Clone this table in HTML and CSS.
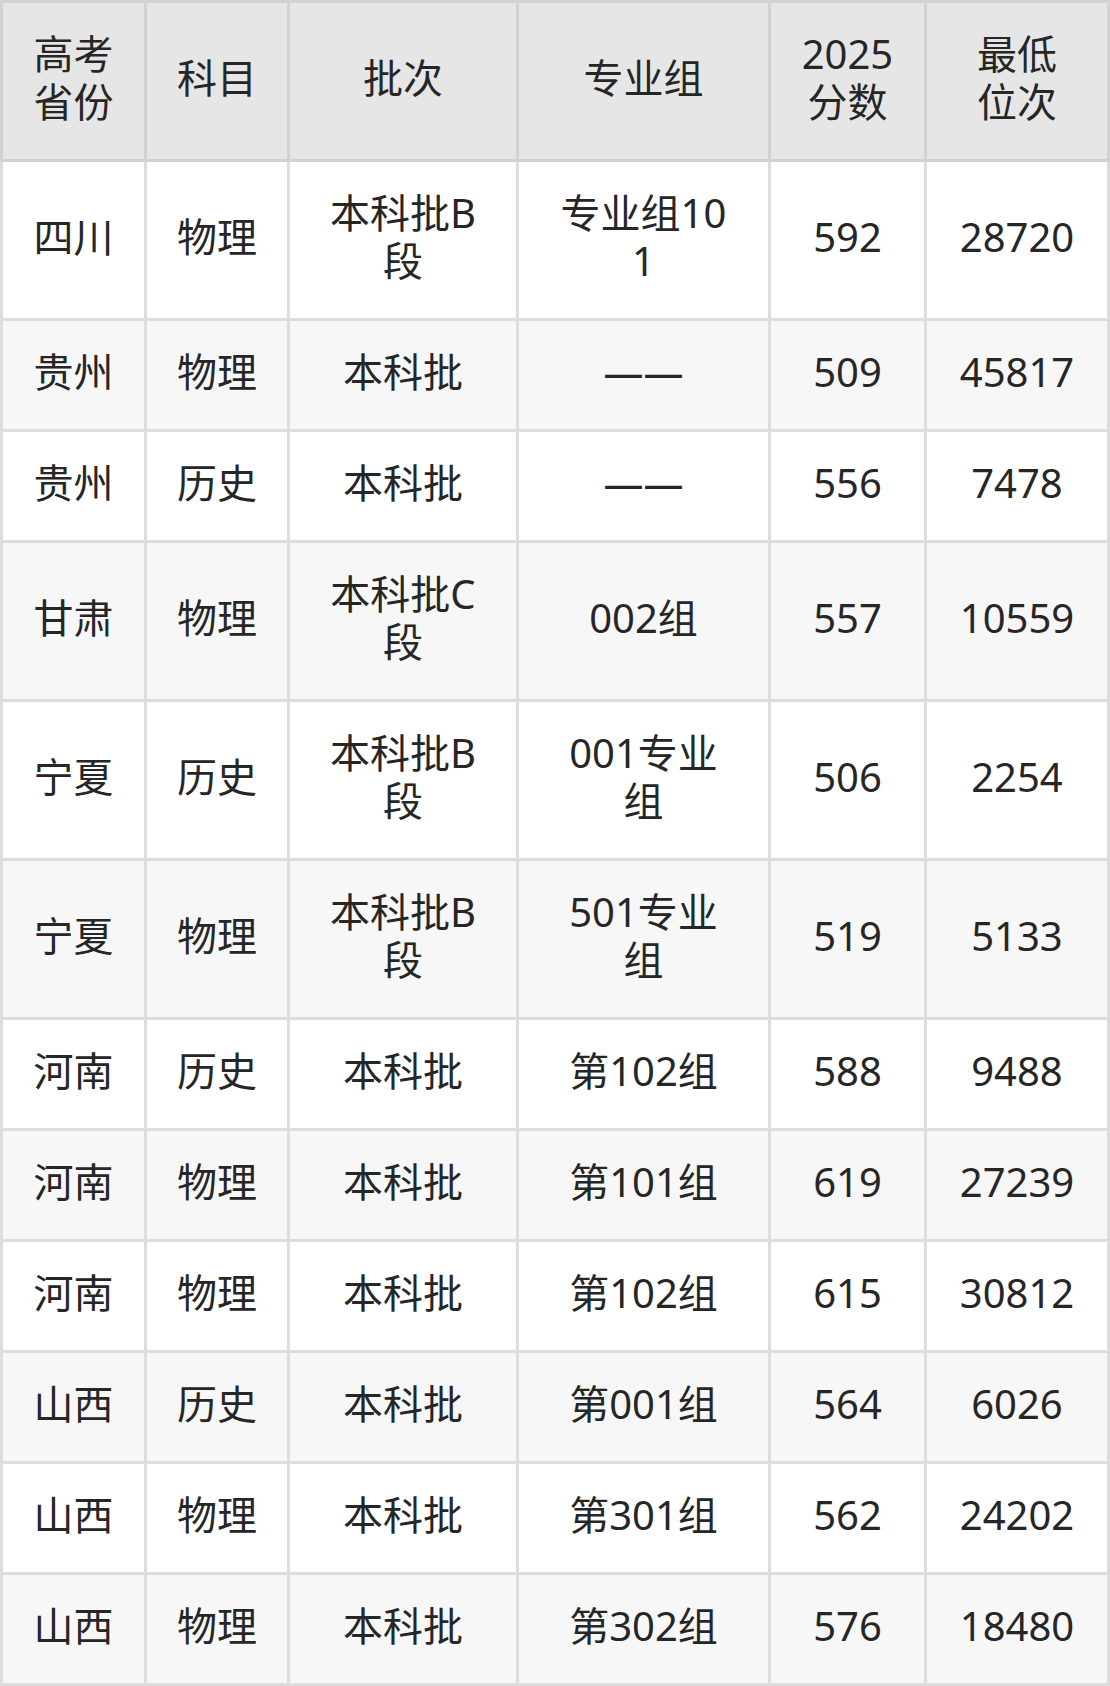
FILE: index.html
```html
<!DOCTYPE html>
<html lang="zh-CN">
<head>
<meta charset="utf-8">
<title>分数线</title>
<link rel="stylesheet" href="styles.css">
</head>
<body>
<table class="score-table">
  <colgroup>
    <col class="c1"><col class="c2"><col class="c3"><col class="c4"><col class="c5"><col class="c6">
  </colgroup>
  <thead>
    <tr><th>高考省份</th><th>科目</th><th class="wide">批次</th><th class="wide">专业组</th><th>2025分数</th><th class="rank">最低位次</th></tr>
  </thead>
  <tbody>
    <tr><td>四川</td><td>物理</td><td class="wide">本科批B段</td><td class="wide">专业组101</td><td>592</td><td class="rank">28720</td></tr>
    <tr><td>贵州</td><td>物理</td><td class="wide">本科批</td><td class="wide">——</td><td>509</td><td class="rank">45817</td></tr>
    <tr><td>贵州</td><td>历史</td><td class="wide">本科批</td><td class="wide">——</td><td>556</td><td class="rank">7478</td></tr>
    <tr><td>甘肃</td><td>物理</td><td class="wide">本科批C段</td><td class="wide">002组</td><td>557</td><td class="rank">10559</td></tr>
    <tr><td>宁夏</td><td>历史</td><td class="wide">本科批B段</td><td class="wide">001专业组</td><td>506</td><td class="rank">2254</td></tr>
    <tr><td>宁夏</td><td>物理</td><td class="wide">本科批B段</td><td class="wide">501专业组</td><td>519</td><td class="rank">5133</td></tr>
    <tr><td>河南</td><td>历史</td><td class="wide">本科批</td><td class="wide">第102组</td><td>588</td><td class="rank">9488</td></tr>
    <tr><td>河南</td><td>物理</td><td class="wide">本科批</td><td class="wide">第101组</td><td>619</td><td class="rank">27239</td></tr>
    <tr><td>河南</td><td>物理</td><td class="wide">本科批</td><td class="wide">第102组</td><td>615</td><td class="rank">30812</td></tr>
    <tr><td>山西</td><td>历史</td><td class="wide">本科批</td><td class="wide">第001组</td><td>564</td><td class="rank">6026</td></tr>
    <tr><td>山西</td><td>物理</td><td class="wide">本科批</td><td class="wide">第301组</td><td>562</td><td class="rank">24202</td></tr>
    <tr><td>山西</td><td>物理</td><td class="wide">本科批</td><td class="wide">第302组</td><td>576</td><td class="rank">18480</td></tr>
  </tbody>
</table>
</body>
</html>
```
FILE: styles.css
```css
html, body {
  margin: 0;
  padding: 0;
  background: #ffffff;
}

.score-table {
  width: 1110px;
  table-layout: fixed;
  border-collapse: separate;
  border-spacing: 0;
  font-family: "Noto Sans", "Noto Sans CJK SC", sans-serif;
  font-size: 40px;
  line-height: 48px;
  color: #262626;
}

.c1 { width: 147px; }
.c2 { width: 143px; }
.c3 { width: 229px; }
.c4 { width: 252px; }
.c5 { width: 156px; }
.c6 { width: 183px; }

.score-table th,
.score-table td {
  box-sizing: border-box;
  padding: 27px 16px 33px;
  text-align: center;
  vertical-align: middle;
  font-weight: normal;
  word-break: break-all;
  border-right: 3px solid #dddddd;
  border-bottom: 3px solid #dddddd;
}

.score-table .wide {
  padding-left: 34px;
  padding-right: 34px;
}

.score-table .rank {
  padding-left: 31px;
  padding-right: 31px;
}

.score-table th:first-child,
.score-table td:first-child {
  border-left: 3px solid #dddddd;
}

.score-table th {
  background: #e6e6e6;
  border-top: 3px solid #d2d2d2;
  border-right-color: #d2d2d2;
  border-bottom-color: #d2d2d2;
}

.score-table th:first-child {
  border-left-color: #d2d2d2;
}

.score-table tbody tr:nth-child(even) td {
  background: #f7f7f7;
}
```
